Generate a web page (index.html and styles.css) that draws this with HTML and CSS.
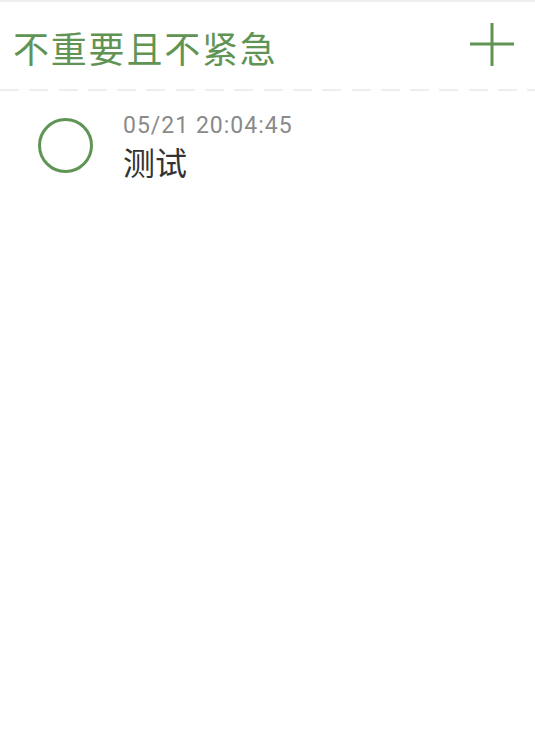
FILE: index.html
```html
<!DOCTYPE html>
<html>
<head>
<meta charset="utf-8">
<link rel="stylesheet" href="styles.css">
</head>
<body>
<div class="topbar"></div>
<header class="header">
  <h1 class="title">不重要且不紧急</h1>
  <button class="add" aria-label="add">
    <svg width="46" height="46" viewBox="0 0 46 46"><path d="M23 2V45M1 23H45" stroke="#5f9455" stroke-width="3" fill="none"/></svg>
  </button>
</header>
<div class="dashed"></div>
<ul class="list">
  <li class="item">
    <span class="check"></span>
    <div class="info">
      <div class="time">05/21 20:04:45</div>
      <div class="text">测试</div>
    </div>
  </li>
</ul>
</body>
</html>
```

FILE: styles.css
```css
html, body {
  margin: 0;
  padding: 0;
  background: #fff;
  font-family: Roboto, "Noto Sans CJK SC", sans-serif;
}
.topbar {
  height: 2px;
  background: #eeeeee;
}
.header {
  height: 87px;
  display: flex;
  align-items: center;
  justify-content: space-between;
  padding: 0 20px 0 13px;
}
.title {
  margin: 0;
  font-family: "Noto Sans CJK SC", sans-serif;
  font-weight: 400;
  font-size: 36px;
  color: #5f9455;
  letter-spacing: 1.8px;
  line-height: 1;
  padding-top: 2px;
}
.add {
  border: 0;
  background: none;
  padding: 0;
  width: 46px;
  height: 46px;
  display: block;
  margin-top: -4px;
}
.add svg { display: block; }
.dashed {
  height: 2px;
  background: repeating-linear-gradient(90deg, #eeeeee 0 19px, transparent 19px 29.3px);
}
.list {
  list-style: none;
  margin: 0;
  padding: 0;
}
.item {
  display: flex;
  align-items: flex-start;
  padding: 22px 0 0 38px;
}
.check {
  width: 49px;
  height: 49px;
  border: 3px solid #5f9455;
  border-radius: 50%;
  margin-top: 5px;
  flex: none;
}
.info {
  margin-left: 30px;
}
.time {
  font-size: 23px;
  line-height: 26px;
  color: #8a8a8a;
  letter-spacing: 1px;
}
.text {
  font-family: "Noto Sans CJK SC", sans-serif;
  font-size: 32px;
  line-height: 40px;
  margin-top: 2px;
  color: #333333;
}
```
